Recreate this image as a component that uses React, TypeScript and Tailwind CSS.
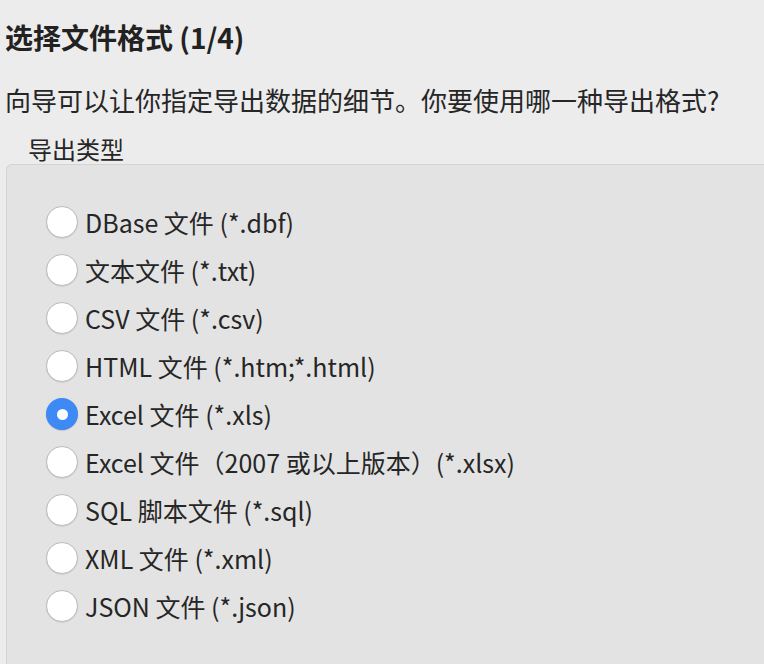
import React from "react";

const items = [
  "DBase 文件 (*.dbf)",
  "文本文件 (*.txt)",
  "CSV 文件 (*.csv)",
  "HTML 文件 (*.htm;*.html)",
  "Excel 文件 (*.xls)",
  "Excel 文件（2007 或以上版本）(*.xlsx)",
  "SQL 脚本文件 (*.sql)",
  "XML 文件 (*.xml)",
  "JSON 文件 (*.json)",
];

export default function App() {
  const selected = 4;
  return (
    <div className="w-[764px] h-[664px] bg-[#ececec] overflow-hidden flex flex-col text-[#262626] [font-family:'Noto_Sans_CJK_SC',sans-serif]">
      <div className="pl-[5px] pt-[19px] text-[28px] leading-[36px] font-bold text-[#222222]">
        选择文件格式 (1/4)
      </div>
      <div className="pl-[5px] mt-[27px] text-[26px] leading-[36px] whitespace-nowrap">
        向导可以让你指定导出数据的细节。你要使用哪一种导出格式?
      </div>
      <div className="pl-[28px] mt-[16px] text-[24px] leading-[30px]">导出类型</div>
      <div className="ml-[6px] flex-1 bg-[#e3e3e3] border-t border-l border-[#d3d3d3] rounded-tl-[6px] pt-[33px] pl-[39px] flex flex-col">
        {items.map((label, i) => (
          <div key={i} className="h-[48px] flex items-center gap-[7px]">
            {i === selected ? (
              <div className="w-[32px] h-[32px] rounded-full bg-[#3d8af7] flex items-center justify-center shadow-[0_0.5px_1px_rgba(0,0,0,0.25)]">
                <div className="w-[11px] h-[11px] rounded-full bg-white" />
              </div>
            ) : (
              <div className="w-[32px] h-[32px] rounded-full bg-white border border-[#bdbdbd] shadow-[0_0.5px_1px_rgba(0,0,0,0.15)]" />
            )}
            <span className="text-[25px] leading-[32px] whitespace-nowrap">{label}</span>
          </div>
        ))}
      </div>
    </div>
  );
}
